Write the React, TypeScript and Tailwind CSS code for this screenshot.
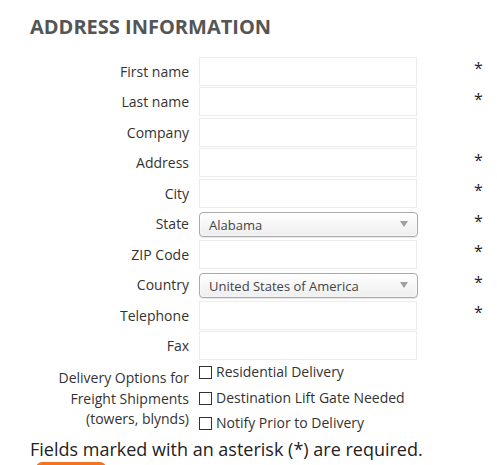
import React from "react";

const font = { fontFamily: '"Open Sans", "Liberation Sans", sans-serif' };

function Row({ label, req, select }: { label: string; req?: boolean; select?: string }) {
  return (
    <div className="flex h-[30.5px] items-center">
      <div className="w-[159px] shrink-0 text-right text-[14px] text-[#333]">{label}</div>
      <div className="ml-[10px] w-[220px] shrink-0">
        {select ? (
          <div className="mt-[1px] flex h-[25px] w-[219px] items-center justify-between rounded-[4px] border border-[#aaa] bg-gradient-to-b from-white to-[#eee] pl-[9px] pr-[9px] text-[13px] text-[#444] shadow-[0_0_3px_white_inset,0_1px_1px_rgba(0,0,0,0.1)]">
            <span className="pt-[2px]">{select}</span>
            <svg width="8" height="6" viewBox="0 0 8 6"><path d="M0 0h8L4 6z" fill="#a0a0a0" /></svg>
          </div>
        ) : (
          <div className="h-[29px] w-[218px] border border-[#ececec] bg-white" />
        )}
      </div>
      <div className="ml-[55px] -mt-[6px] text-[16px] text-[#222]">{req ? "*" : ""}</div>
    </div>
  );
}

function Check({ label }: { label: string }) {
  return (
    <div className="flex h-[25.5px] items-center">
      <div className="h-[13px] w-[13px] border border-[#333] bg-white" />
      <span className="ml-[4px] -mt-[2px] text-[14px] text-[#333]">{label}</span>
    </div>
  );
}

export default function App() {
  return (
    <div className="h-[465px] w-[497px] overflow-hidden bg-white" style={font}>
      <div className="pl-[30px]">
        <h2 className="pt-[13px] text-[20px] font-bold leading-[28px] text-[#555]">ADDRESS INFORMATION</h2>
        <div className="mt-[15px]">
          <Row label="First name" req />
          <Row label="Last name" req />
          <Row label="Company" />
          <Row label="Address" req />
          <Row label="City" req />
          <Row label="State" req select="Alabama" />
          <Row label="ZIP Code" req />
          <Row label="Country" req select="United States of America" />
          <Row label="Telephone" req />
          <Row label="Fax" />
        </div>
        <div className="-mt-[1px] flex">
          <div className="w-[159px] shrink-0 pt-[8px] text-right text-[14px] leading-[20.5px] text-[#333]">
            Delivery Options for
            <br />
            Freight Shipments
            <br />
            (towers, blynds)
          </div>
          <div className="ml-[10px]">
            <Check label="Residential Delivery" />
            <Check label="Destination Lift Gate Needed" />
            <Check label="Notify Prior to Delivery" />
          </div>
        </div>
        <p className="mt-[-1px] text-[18px] leading-[26px] text-[#222]">Fields marked with an asterisk (*) are required.</p>
        <div className="ml-[6px] h-[20px] w-[70px] rounded-[6px] bg-[#f27423]" />
      </div>
    </div>
  );
}
